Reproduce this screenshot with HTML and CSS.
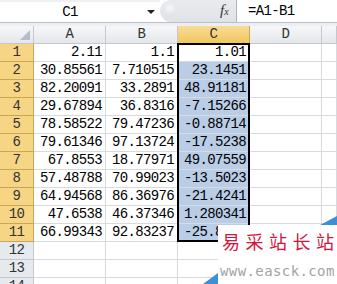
FILE: index.html
```html
<!DOCTYPE html>
<html lang="zh-CN">
<head>
  <meta charset="UTF-8">
  <title>Excel - C1</title>
  <link rel="stylesheet" href="styles.css">
</head>
<body>
  <div class="formula-bar">
    <div class="name-box">
      <span class="name">C1</span>
      <span class="drop"></span>
    </div>
    <div class="fx-area">
      <span class="grip"></span>
      <span class="fx">f<small>x</small></span>
    </div>
    <div class="formula">=A1-B1</div>
  </div>
  <div class="bar-gap"></div>

  <div class="sheet">
    <div class="corner"><span class="tri"></span></div>
    <div class="col-head">A</div>
    <div class="col-head">B</div>
    <div class="col-head on">C</div>
    <div class="col-head">D</div>
    <div class="col-head"></div>

    <div class="row-head on">1</div><div class="cell">2.11</div><div class="cell">1.1</div><div class="cell">1.01</div><div class="cell"></div><div class="cell"></div>
    <div class="row-head on">2</div><div class="cell">30.85561</div><div class="cell">7.710515</div><div class="cell sel">23.1451</div><div class="cell"></div><div class="cell"></div>
    <div class="row-head on">3</div><div class="cell">82.20091</div><div class="cell">33.2891</div><div class="cell sel">48.91181</div><div class="cell"></div><div class="cell"></div>
    <div class="row-head on">4</div><div class="cell">29.67894</div><div class="cell">36.8316</div><div class="cell sel">-7.15266</div><div class="cell"></div><div class="cell"></div>
    <div class="row-head on">5</div><div class="cell">78.58522</div><div class="cell">79.47236</div><div class="cell sel">-0.88714</div><div class="cell"></div><div class="cell"></div>
    <div class="row-head on">6</div><div class="cell">79.61346</div><div class="cell">97.13724</div><div class="cell sel">-17.5238</div><div class="cell"></div><div class="cell"></div>
    <div class="row-head on">7</div><div class="cell">67.8553</div><div class="cell">18.77971</div><div class="cell sel">49.07559</div><div class="cell"></div><div class="cell"></div>
    <div class="row-head on">8</div><div class="cell">57.48788</div><div class="cell">70.99023</div><div class="cell sel">-13.5023</div><div class="cell"></div><div class="cell"></div>
    <div class="row-head on">9</div><div class="cell">64.94568</div><div class="cell">86.36976</div><div class="cell sel">-21.4241</div><div class="cell"></div><div class="cell"></div>
    <div class="row-head on">10</div><div class="cell">47.6538</div><div class="cell">46.37346</div><div class="cell sel">1.280341</div><div class="cell"></div><div class="cell"></div>
    <div class="row-head on">11</div><div class="cell">66.99343</div><div class="cell">92.83237</div><div class="cell sel">-25.8389</div><div class="cell"></div><div class="cell"></div>
    <div class="row-head">12</div><div class="cell"></div><div class="cell"></div><div class="cell"></div><div class="cell"></div><div class="cell"></div>
    <div class="row-head">13</div><div class="cell"></div><div class="cell"></div><div class="cell"></div><div class="cell"></div><div class="cell"></div>
    <div class="row-head">14</div><div class="cell"></div><div class="cell"></div><div class="cell"></div><div class="cell"></div><div class="cell"></div>

    <div class="range-box"></div>
  </div>

  <div class="watermark">
    <div class="wm-title">易采站长站</div>
    <div class="wm-url">www.easck.com</div>
  </div>
</body>
</html>
```

FILE: styles.css
```css
html, body {
  margin: 0;
  padding: 0;
  overflow: hidden;
  background: #fff;
}

body {
  font-family: "Liberation Mono", monospace;
  font-size: 14px;
  letter-spacing: -0.65px;
  color: #000;
  position: relative;
  width: 337px;
  height: 284px;
}

/* formula bar */
.formula-bar {
  display: flex;
  height: 22px;
  border-bottom: 1px solid #b9bfc8;
  background: #fff;
}

.name-box {
  width: 160px;
  display: flex;
  align-items: center;
  border-top: 2px solid #eef0f3;
  box-sizing: border-box;
}

.name {
  width: 140px;
  text-align: center;
}

.drop {
  width: 0;
  height: 0;
  margin-left: 7px;
  border-left: 4px solid transparent;
  border-right: 4px solid transparent;
  border-top: 4px solid #222;
}

.fx-area {
  width: 76px;
  position: relative;
  background: linear-gradient(#e9ebee, #dfe2e7);
  border-radius: 11px 0 0 11px;
  border-right: 1px solid #aeb4bd;
}

.grip {
  position: absolute;
  left: 3px;
  top: 3px;
  width: 14px;
  height: 14px;
  border-radius: 50%;
  background: radial-gradient(circle at 50% 35%, #f6f7f9, #d5d9df);
}

.fx {
  position: absolute;
  left: 60px;
  top: 2px;
  font-family: "Liberation Serif", serif;
  font-style: italic;
  font-size: 15px;
  letter-spacing: 0;
  color: #333;
}

.fx small {
  font-size: 10px;
}

.formula {
  flex: 1;
  padding-left: 11px;
  line-height: 22px;
}

.bar-gap {
  height: 3px;
  background: #eceef1;
}

/* grid */
.sheet {
  position: relative;
  display: grid;
  grid-template-columns: 34px 72px 72px 72px 72px 15px;
  grid-auto-rows: 18px;
}

.sheet > div {
  box-sizing: border-box;
  border-right: 1px solid #d7dade;
  border-bottom: 1px solid #d7dade;
  line-height: 17px;
}

.corner {
  position: relative;
  background: linear-gradient(#f6f7f9, #e4e7eb);
  border-color: #c3c8cf !important;
}

.tri {
  position: absolute;
  right: 3px;
  bottom: 3px;
  width: 10px;
  height: 10px;
  background: #b8bec7;
  clip-path: polygon(100% 0, 100% 100%, 0 100%);
}

.col-head {
  text-align: center;
  color: #333;
  background: linear-gradient(#f6f7f9, #e4e7eb);
  border-color: #c3c8cf !important;
}

.col-head.on {
  background: linear-gradient(#f9dc95, #f2c65f);
  border-color: #c9a656 !important;
}

.row-head {
  text-align: center;
  color: #333;
  background: #e6e9ee;
  border-color: #c3c8cf !important;
}

.row-head.on {
  background: #f6d684;
  border-color: #c9a656 !important;
}

.cell {
  text-align: right;
  padding-right: 3px;
  white-space: nowrap;
  overflow: hidden;
}

.cell.sel {
  background: #bacde7;
}

.range-box {
  position: absolute;
  left: 177px;
  top: 17px;
  width: 73px;
  height: 199px;
  border: 2px solid #000 !important;
  box-sizing: border-box;
}

/* watermark overlay */
.watermark {
  position: absolute;
  left: 218px;
  top: 225px;
  right: 0;
  bottom: 0;
  background: #fff;
  letter-spacing: 0;
}

.watermark::before {
  content: "";
  position: absolute;
  right: 0;
  top: -9px;
  width: 17px;
  height: 9px;
  background: #3d8fd6;
  clip-path: polygon(100% 0, 100% 100%, 0 100%);
}

.watermark::after {
  content: "";
  position: absolute;
  left: -15px;
  bottom: 0;
  width: 15px;
  height: 11px;
  background: #3d8fd6;
  clip-path: polygon(100% 0, 100% 100%, 0 100%);
}

.wm-title {
  margin: 6px 0 0 4px;
  font-family: "Noto Sans CJK SC", sans-serif;
  font-size: 18px;
  line-height: 20px;
  letter-spacing: 5.5px;
  color: #d4153d;
  white-space: nowrap;
}

.wm-url {
  margin: 12px 0 0 2px;
  font-family: "DejaVu Sans Mono", monospace;
  font-size: 14px;
  letter-spacing: 0.4px;
  color: #a3a3a3;
  white-space: nowrap;
}
```
